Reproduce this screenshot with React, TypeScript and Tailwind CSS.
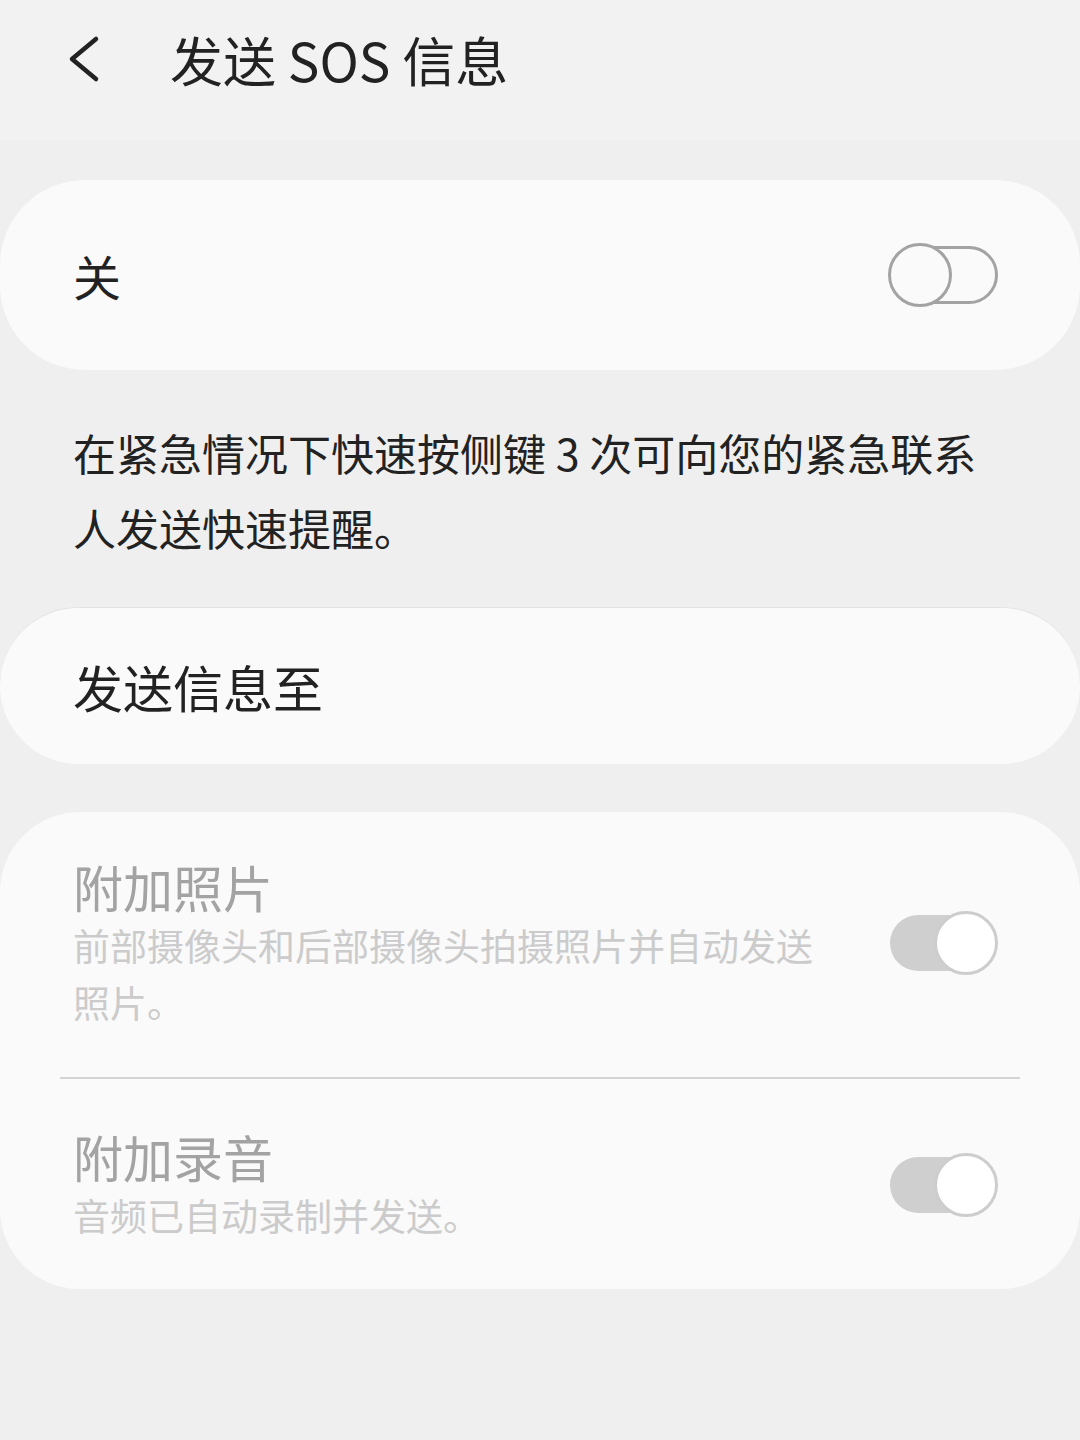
import React from "react";

const font = { fontFamily: '"Noto Sans CJK SC", "Noto Sans", sans-serif' };

function Toggle({ on }: { on: boolean }) {
  if (!on) {
    return (
      <div className="relative h-[64px] w-[110px] shrink-0">
        <div className="absolute left-[2px] right-0 top-[3px] h-[58px] rounded-full border-[3px] border-[#a3a3a3]" />
        <div className="absolute left-0 top-0 h-[64px] w-[64px] rounded-full border-[3px] border-[#a3a3a3] bg-[#fafafa]" />
      </div>
    );
  }
  return (
    <div className="relative h-[64px] w-[108px] shrink-0">
      <div className="absolute left-0 right-[4px] top-[4px] h-[56px] rounded-full bg-[#cfcfcf]" />
      <div className="absolute right-0 top-0 h-[64px] w-[64px] rounded-full border-[3px] border-[#cdcdcd] bg-white" />
    </div>
  );
}

export default function App() {
  return (
    <div className="min-h-[1440px] w-[1080px] bg-[#efefef]" style={font}>
      {/* Header */}
      <div className="flex h-[140px] items-center bg-[#f2f2f2] pb-[22px]">
        <svg width="44" height="52" viewBox="0 0 44 52" className="ml-[60px]">
          <path d="M36 6 L12 26 L36 46" fill="none" stroke="#222" strokeWidth="4.5" strokeLinecap="round" strokeLinejoin="round" />
        </svg>
        <h1 className="ml-[66px] text-[53px] leading-none text-[#222]">发送 SOS 信息</h1>
      </div>

      <div className="flex flex-col pt-[40px]">
        {/* Master switch */}
        <div className="flex h-[190px] items-center justify-between rounded-[85px] bg-[#fafafa] pl-[73px] pr-[82px]">
          <span className="text-[48px] text-[#222]">关</span>
          <Toggle on={false} />
        </div>

        <p className="mt-[45px] pl-[73px] pr-[80px] text-[43px] leading-[75px] text-[#222]">
          在紧急情况下快速按侧键 3 次可向您的紧急联系人发送快速提醒。
        </p>

        {/* Send to */}
        <div className="mt-[42px] flex h-[157px] items-center rounded-[80px] border-t border-[#e2e2e2] bg-[#fafafa] pl-[73px]">
          <span className="text-[50px] text-[#222]">发送信息至</span>
        </div>

        {/* Attachments */}
        <div className="mt-[48px] flex flex-col rounded-[80px] bg-[#fafafa] px-[60px] pb-[45px] pt-[43px]">
          <div className="flex items-center justify-between pb-[46px] pl-[13px] pr-[22px]">
            <div className="flex w-[760px] flex-col">
              <span className="text-[50px] leading-[62px] text-[#a3a3a3]">附加照片</span>
              <span className="text-[37px] leading-[57px] text-[#cbcbcb]">
                前部摄像头和后部摄像头拍摄照片并自动发送照片。
              </span>
            </div>
            <Toggle on={true} />
          </div>
          <div className="h-[2px] bg-[#d4d4d4]" />
          <div className="flex items-center justify-between pl-[13px] pr-[22px] pt-[46px]">
            <div className="flex flex-col">
              <span className="text-[50px] leading-[62px] text-[#a3a3a3]">附加录音</span>
              <span className="text-[37px] leading-[57px] text-[#cbcbcb]">音频已自动录制并发送。</span>
            </div>
            <Toggle on={true} />
          </div>
        </div>
      </div>
    </div>
  );
}
